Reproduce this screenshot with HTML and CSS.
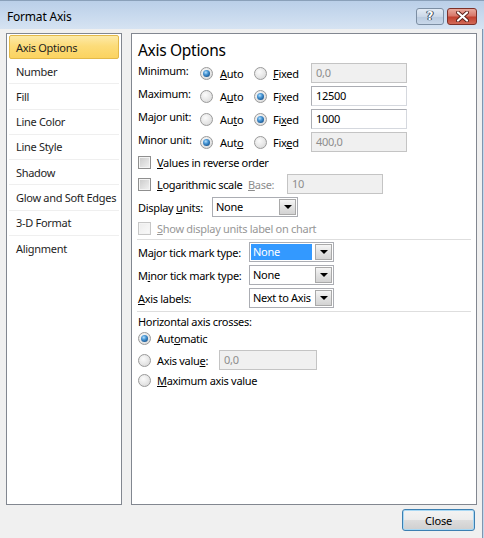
FILE: index.html
```html
<!DOCTYPE html>
<html>
<head>
<meta charset="utf-8">
<title>Format Axis</title>
<link rel="stylesheet" href="styles.css">
</head>
<body>
<div class="window">
  <div class="titlebar">
    <span class="title">Format Axis</span>
    <div class="caption-buttons">
      <span class="cap-btn help">?</span>
      <span class="cap-btn close">
        <svg width="13" height="11" viewBox="0 0 13 11">
          <path d="M2 1.5 L11 9.5 M11 1.5 L2 9.5" stroke="#5a1e18" stroke-width="4" stroke-linecap="round"/>
          <path d="M2 1.5 L11 9.5 M11 1.5 L2 9.5" stroke="#ffffff" stroke-width="2.2" stroke-linecap="round"/>
        </svg>
      </span>
    </div>
  </div>
  <div class="frame-body">
    <div class="client">
      <div class="panels">
        <ul class="nav">
          <li class="nav-item selected">Axis Options</li>
          <li class="nav-item">Number</li>
          <li class="nav-item">Fill</li>
          <li class="nav-item">Line Color</li>
          <li class="nav-item">Line Style</li>
          <li class="nav-item">Shadow</li>
          <li class="nav-item">Glow and Soft Edges</li>
          <li class="nav-item">3-D Format</li>
          <li class="nav-item">Alignment</li>
        </ul>
        <div class="content">
          <div class="heading">Axis Options</div>

          <div class="bounds">
            <div class="bound-row">
              <span class="lbl">Minimum:</span>
              <span class="opt"><span class="radio checked"></span><span><u>A</u>uto</span></span>
              <span class="opt"><span class="radio"></span><span><u>F</u>ixed</span></span>
              <span class="textbox disabled">0,0</span>
            </div>
            <div class="bound-row">
              <span class="lbl">Maximum:</span>
              <span class="opt"><span class="radio"></span><span>A<u>u</u>to</span></span>
              <span class="opt"><span class="radio checked"></span><span>F<u>i</u>xed</span></span>
              <span class="textbox">12500</span>
            </div>
            <div class="bound-row">
              <span class="lbl">Major unit:</span>
              <span class="opt"><span class="radio"></span><span>Au<u>t</u>o</span></span>
              <span class="opt"><span class="radio checked"></span><span>Fi<u>x</u>ed</span></span>
              <span class="textbox">1000</span>
            </div>
            <div class="bound-row">
              <span class="lbl">Minor unit:</span>
              <span class="opt"><span class="radio checked"></span><span>Aut<u>o</u></span></span>
              <span class="opt"><span class="radio"></span><span>Fix<u>e</u>d</span></span>
              <span class="textbox disabled">400,0</span>
            </div>
          </div>

          <div class="check-row first">
            <span class="checkbox"></span><span><u>V</u>alues in reverse order</span>
          </div>
          <div class="check-row log-row">
            <span class="checkbox"></span><span class="log-text"><u>L</u>ogarithmic scale</span>
            <span class="base-label"><u>B</u>ase:</span>
            <span class="textbox disabled base-box">10</span>
          </div>
          <div class="field-row units-row">
            <span class="units-label">Display <u>u</u>nits:</span>
            <span class="select units-select"><span class="val">None</span><span class="arrow"><span class="tri"></span></span></span>
          </div>
          <div class="check-row show-row disabled-text">
            <span class="checkbox disabled"></span><span><u>S</u>how display units label on chart</span>
          </div>

          <div class="sep sep-1"></div>

          <div class="field-row tick-row first-tick">
            <span class="tick-label">Ma<u>j</u>or tick mark type:</span>
            <span class="select tick-select"><span class="val highlight">None</span><span class="arrow"><span class="tri"></span></span></span>
          </div>
          <div class="field-row tick-row">
            <span class="tick-label">M<u>i</u>nor tick mark type:</span>
            <span class="select tick-select"><span class="val">None</span><span class="arrow"><span class="tri"></span></span></span>
          </div>
          <div class="field-row tick-row">
            <span class="tick-label"><u>A</u>xis labels:</span>
            <span class="select tick-select"><span class="val">Next to Axis</span><span class="arrow"><span class="tri"></span></span></span>
          </div>

          <div class="sep sep-2"></div>

          <div class="cross-title">Horizontal axis crosses:</div>
          <div class="radio-row auto-row">
            <span class="radio checked"></span><span>Aut<u>o</u>matic</span>
          </div>
          <div class="radio-row value-row">
            <span class="radio"></span><span class="value-label">Axis valu<u>e</u>:</span>
            <span class="textbox disabled value-box">0,0</span>
          </div>
          <div class="radio-row max-row">
            <span class="radio"></span><span><u>M</u>aximum axis value</span>
          </div>
        </div>
      </div>
      <div class="footer">
        <button class="btn default">Close</button>
      </div>
    </div>
    <div class="frame-edge"></div>
  </div>
</div>
</body>
</html>
```

FILE: styles.css
```css
html, body {
  margin: 0;
  padding: 0;
  background: #f0f0f0;
}

body {
  font-family: "Noto Sans", "Open Sans", sans-serif;
  font-size: 11px;
  letter-spacing: -0.3px;
  color: #000;
}

u {
  text-decoration: underline;
  text-underline-offset: 1px;
}

.window {
  width: 484px;
  height: 538px;
  display: flex;
  flex-direction: column;
  overflow: hidden;
}

/* ---------- title bar ---------- */
.titlebar {
  height: 28px;
  flex: none;
  border-top: 1px solid #8aa0b9;
  background: linear-gradient(#bacfe8, #c9daee 55%, #d6e3f2);
  display: flex;
  align-items: center;
  justify-content: space-between;
  padding: 0 7px 0 7px;
}

.title {
  font-size: 12px;
  letter-spacing: -0.2px;
  color: #000;
  margin-top: 2px;
}

.caption-buttons {
  display: flex;
  gap: 3px;
  margin-top: 2px;
}

.cap-btn {
  height: 17px;
  box-sizing: border-box;
  border-radius: 3px;
  display: flex;
  align-items: center;
  justify-content: center;
}

.help {
  width: 28px;
  border: 1px solid #7c8ea3;
  background: linear-gradient(#e3ebf5, #cbd8e8 50%, #b9cadf 51%, #c9d8ea);
  color: #fff;
  font-weight: bold;
  font-size: 12px;
  letter-spacing: 0;
  font-family: "DejaVu Sans", sans-serif;
  text-shadow: 0 0 1px #2c3b4f, 0 0 1px #2c3b4f, 1px 0 0 #3e4f66, -1px 0 0 #3e4f66;
}

.close {
  width: 30px;
  border: 1px solid #7d3028;
  background: linear-gradient(#e9a99d, #d7776a 45%, #c2402f 55%, #d26a57);
}

/* ---------- body ---------- */
.frame-body {
  flex: 1;
  display: flex;
}

.client {
  width: 482px;
  box-sizing: border-box;
  padding: 4px 5px 0 6px;
  background: #f0f0f0;
  display: flex;
  flex-direction: column;
}

.frame-edge {
  flex: none;
  width: 1px;
  border-left: 1px solid #7f96b0;
  background: #c3d6ec;
}

.panels {
  display: flex;
  gap: 9px;
  height: 472px;
}

/* ---------- nav list ---------- */
.nav {
  width: 116px;
  box-sizing: border-box;
  margin: 0;
  padding: 1px;
  list-style: none;
  background: #fff;
  border: 1px solid #828790;
}

.nav-item {
  height: 25.25px;
  box-sizing: border-box;
  margin: 0 1px;
  padding-left: 7px;
  display: flex;
  align-items: center;
  white-space: nowrap;
  border-bottom: 1px solid #efefef;
  color: #1e1e1e;
}

.nav-item.selected {
  height: 24px;
  margin: 0 1px;
  padding-left: 6px;
  border: 1px solid #e3b949;
  border-radius: 2px;
  background: linear-gradient(#fdeaa8, #fcdc7a 45%, #fbd360 100%);
}

.nav-item:last-child {
  border-bottom: none;
}

/* ---------- content ---------- */
.content {
  width: 346px;
  box-sizing: border-box;
  background: #fff;
  border: 1px solid #828790;
  padding: 6px 6px 0 6px;
}

.heading {
  font-size: 15.5px;
  line-height: 20px;
  height: 20px;
  color: #000;
}

.bounds {
  margin-top: 3px;
  display: flex;
  flex-direction: column;
  gap: 3px;
}

.bound-row {
  display: grid;
  grid-template-columns: 62px 54px 57px 96px;
  height: 20px;
  align-items: center;
  white-space: nowrap;
}

.bound-row .lbl {
  align-self: start;
  line-height: 16px;
}

.opt {
  display: flex;
  align-items: center;
  gap: 7px;
}

.opt + .opt {
  gap: 6px;
}

/* radio */
.radio {
  width: 13px;
  height: 13px;
  flex: none;
  box-sizing: border-box;
  border-radius: 50%;
  border: 1px solid #9a9a9a;
  background: radial-gradient(circle at 40% 35%, #fbfbfb 0, #e6e6e6 55%, #d2d2d2 100%);
  display: flex;
  align-items: center;
  justify-content: center;
}

.radio.checked::after {
  content: "";
  width: 7px;
  height: 7px;
  border-radius: 50%;
  background: radial-gradient(circle at 40% 35%, #b9e0fb 0, #4a98d6 35%, #1a5a96 75%, #123e6e 100%);
}

/* checkbox */
.checkbox {
  width: 13px;
  height: 13px;
  flex: none;
  box-sizing: border-box;
  border: 1px solid #8f8f8f;
  background: linear-gradient(135deg, #c9c9c9, #f3f3f3);
  box-shadow: inset 0 0 0 1px #f4f4f4;
}

.checkbox.disabled {
  border-color: #c7c7c7;
  background: linear-gradient(135deg, #ececec, #fafafa);
}

/* textbox */
.textbox {
  height: 20px;
  box-sizing: border-box;
  border: 1px solid #abadb3;
  border-right-color: #d5d8de;
  border-bottom-color: #d5d8de;
  padding-left: 4px;
  line-height: 18px;
  background: #fff;
}

.textbox.disabled {
  background: #f0f0f0;
  color: #8d8d8d;
  border-color: #c4c4c4;
}

/* checkbox rows */
.check-row {
  display: flex;
  align-items: center;
  gap: 6px;
  height: 18px;
  white-space: nowrap;
}

.check-row.first {
  margin-top: 1px;
}

.log-row {
  margin-top: 3px;
  height: 20px;
}

.log-text {
  width: 85px;
}

.base-label {
  width: 33px;
  color: #8d8d8d;
}

.base-box {
  width: 96px;
}

.field-row {
  display: flex;
  align-items: center;
  height: 20px;
  white-space: nowrap;
}

.units-row {
  margin-top: 3px;
}

.units-label {
  width: 74px;
}

.show-row {
  margin-top: 2px;
}

.disabled-text {
  color: #979797;
}

/* select */
.select {
  height: 20px;
  box-sizing: border-box;
  border: 1px solid #abadb3;
  background: #fff;
  display: flex;
  align-items: stretch;
}

.select .val {
  flex: 1;
  padding-left: 3px;
  line-height: 18px;
  white-space: nowrap;
  overflow: hidden;
}

.select .val.highlight {
  margin: 1px 2px 1px 1px;
  padding-left: 2px;
  line-height: 16px;
  background: #3399ff;
  color: #fff;
}

.select .arrow {
  width: 17px;
  box-sizing: border-box;
  margin: 1px;
  border: 1px solid #a9a9a9;
  background: linear-gradient(#f6f6f6, #e2e2e2 50%, #d3d3d3);
  display: flex;
  align-items: center;
  justify-content: center;
}

.tri {
  width: 0;
  height: 0;
  border-left: 4px solid transparent;
  border-right: 4px solid transparent;
  border-top: 4px solid #000;
}

.units-select {
  width: 86px;
}

.tick-label {
  width: 111px;
}

.tick-select {
  width: 85px;
}

.tick-row {
  margin-top: 3px;
}

.tick-row.first-tick {
  margin-top: 2px;
}

.sep {
  height: 1px;
  background: #dedede;
  margin-left: -1px;
  margin-right: -1px;
}

.sep-1 {
  margin-top: 2px;
}

.sep-2 {
  margin-top: 3px;
}

.cross-title {
  margin-top: 2px;
  height: 16px;
  line-height: 16px;
}

.radio-row {
  display: flex;
  align-items: center;
  gap: 6px;
  white-space: nowrap;
}

.auto-row {
  height: 16px;
}

.value-row {
  margin-top: 4px;
  height: 20px;
}

.value-label {
  width: 56px;
}

.value-box {
  width: 98px;
}

.max-row {
  margin-top: 1px;
  height: 18px;
}

/* footer */
.footer {
  display: flex;
  justify-content: flex-end;
  padding-top: 4px;
  padding-right: 2px;
}

.btn {
  width: 73px;
  height: 22px;
  font-family: "Noto Sans", "Open Sans", sans-serif;
  font-size: 11px;
  letter-spacing: -0.2px;
  color: #000;
  border-radius: 3px;
  border: 1px solid #3c7fb1;
  background: linear-gradient(#f3f3f3, #ececec 50%, #dddddd 51%, #cfcfcf);
  box-shadow: inset 0 0 0 1px #a8d8f4;
  padding: 0;
}
```
